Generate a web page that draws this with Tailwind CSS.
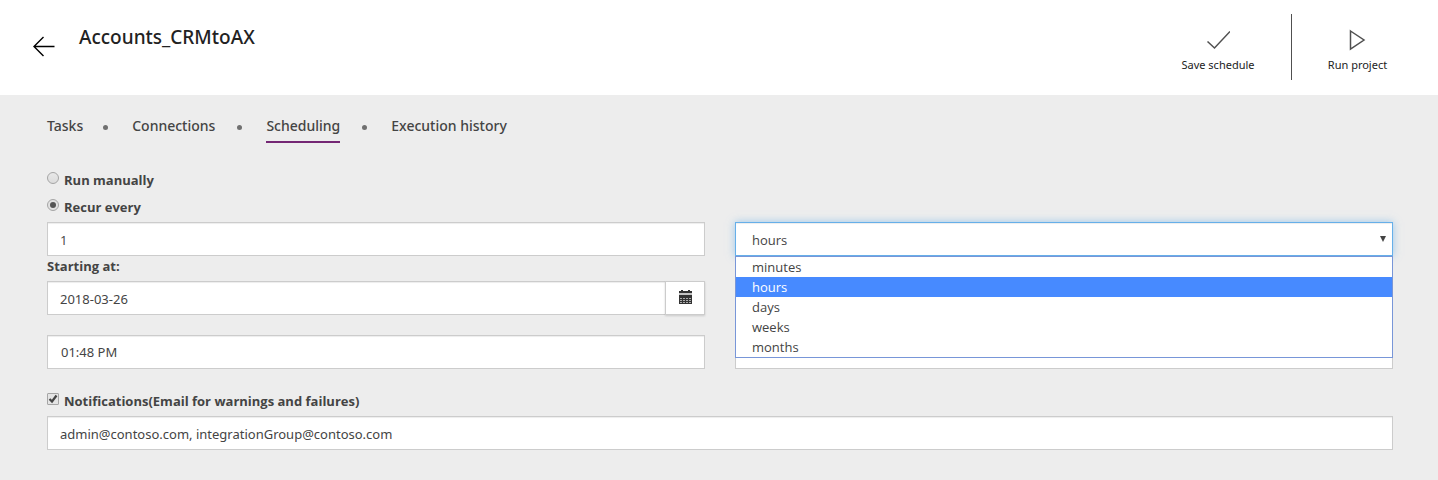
<!DOCTYPE html>
<html lang="en">
<head>
<meta charset="utf-8">
<meta name="viewport" content="width=device-width, initial-scale=1">
<title>Accounts_CRMtoAX</title>
<script src="https://cdn.jsdelivr.net/npm/@tailwindcss/browser@4"></script>
</head>
<body class="min-h-screen bg-[#ededed] font-['Open_Sans','Noto_Sans',sans-serif] text-[13px] leading-5 text-[#444]">
<header class="flex h-[95px] items-start bg-white pl-8 pr-[15px] font-['Noto_Sans',sans-serif]">
  <button type="button" aria-label="Back" class="mt-[34px] text-black">
    <svg class="block size-6" viewBox="0 0 24 24" fill="none" stroke="currentColor" stroke-width="1.4"><path d="M22.5 12.5H2M11.5 3L2 12.5L11.5 22"/></svg>
  </button>
  <h1 class="ml-[23px] mt-6 text-[19px] leading-[26px] font-medium text-[#222]">Accounts_CRMtoAX</h1>
  <div class="ml-auto mt-[14px] flex h-[66px] text-[11px] leading-4 text-[#222]">
    <button type="button" class="flex w-[146px] flex-col items-center pt-[14px]">
      <svg class="block size-6" viewBox="0 0 24 24" fill="none" stroke="#505050" stroke-width="1.5"><path d="M1.5 13.5L8.5 20L24 3.5"/></svg>
      <span class="mt-[5px]">Save schedule</span>
    </button>
    <div class="w-px bg-[#505050]"></div>
    <button type="button" class="flex w-[131px] flex-col items-center pt-[14px]">
      <svg class="block size-6" viewBox="0 0 24 24" fill="none" stroke="#505050" stroke-width="1.5"><path d="M4.5 3L18 12L4.5 21Z"/></svg>
      <span class="mt-[5px]">Run project</span>
    </button>
  </div>
</header>
<main class="pl-[47px] pr-[45px] pt-5">
  <nav class="flex items-start font-['Noto_Sans',sans-serif] text-[14px] leading-[22px] font-medium">
    <a href="#tasks" class="whitespace-nowrap">Tasks</a>
    <span class="mr-6 ml-5 mt-[10px] size-[5px] rounded-full bg-[#707070]"></span>
    <a href="#connections" class="whitespace-nowrap">Connections</a>
    <span class="mr-6 ml-[22px] mt-[10px] size-[5px] rounded-full bg-[#707070]"></span>
    <a href="#scheduling" aria-current="page" class="border-b-2 border-[#742774] pb-1 whitespace-nowrap">Scheduling</a>
    <span class="mr-6 ml-[22px] mt-[10px] size-[5px] rounded-full bg-[#707070]"></span>
    <a href="#history" class="whitespace-nowrap">Execution history</a>
  </nav>
  <form class="mt-[27px]">
    <div class="flex flex-col gap-[7px] font-bold">
      <label class="flex h-5 items-start gap-[5px]"><input type="radio" name="mode" class="mt-[2px] size-3 appearance-none rounded-full border border-[#a5a5a5] bg-linear-to-b from-[#e8e8e8] to-[#dcdcdc]">Run manually</label>
      <label class="flex h-5 items-start gap-[5px]"><input type="radio" name="mode" checked class="mt-[2px] grid size-3 appearance-none place-items-center rounded-full border border-[#a5a5a5] bg-[#e2e2e2] before:size-[6px] before:rounded-full before:bg-[#555]">Recur every</label>
    </div>
    <div class="mt-[5px] grid grid-cols-2 gap-x-[30px]">
      <input type="text" aria-label="Recurrence interval" value="1" class="h-[34px] w-full border border-[#ccc] bg-white px-3 pt-[2px] shadow-[inset_0_1px_1px_rgba(0,0,0,0.075)]">
      <div class="relative">
        <select aria-label="Recurrence unit" class="block h-[34px] w-full appearance-none border border-[#66afe9] bg-white px-4 pt-[2px] shadow-[inset_0_1px_1px_rgba(0,0,0,0.075),0_0_8px_rgba(102,175,233,0.6)]">
          <option>minutes</option><option selected>hours</option><option>days</option><option>weeks</option><option>months</option>
        </select>
        <svg class="pointer-events-none absolute top-[14px] right-[7px] h-[6px] w-[6px]" viewBox="0 0 6 6" fill="#444"><path d="M0 0H6L3 6Z"/></svg>
        <ul role="listbox" aria-label="Recurrence unit choices" class="absolute top-[34px] right-0 left-0 z-10 border border-[#7896d8] bg-white">
          <li role="option" class="h-5 px-4">minutes</li>
          <li role="option" aria-selected="true" class="h-5 bg-[#478aff] px-4 text-white">hours</li>
          <li role="option" class="h-5 px-4">days</li>
          <li role="option" class="h-5 px-4">weeks</li>
          <li role="option" class="h-5 px-4">months</li>
        </ul>
      </div>
      <label for="start" class="col-span-2 mb-[5px] h-5 font-bold">Starting at:</label>
      <div class="flex h-[34px]">
        <input id="start" type="text" value="2018-03-26" class="min-w-0 flex-1 border border-r-0 border-[#ccc] bg-white px-3 pt-[2px] font-['Noto_Sans',sans-serif] shadow-[inset_0_1px_1px_rgba(0,0,0,0.075)]">
        <button type="button" aria-label="Choose date" class="flex w-10 items-start justify-center border border-[#ccc] bg-white pt-[8px] shadow-[0_1px_2px_rgba(0,0,0,0.15)]">
          <svg class="block h-[14px] w-[13px]" viewBox="0 0 13 14" shape-rendering="crispEdges"><path fill="#333" d="M2 0h2v1h5V0h2v1h2v2H0V1h2z"/><path fill="#c4c4c4" d="M0 3h13v2H0z"/><path fill="#333" d="M0 5h13v9H0z"/><path stroke="#aaa" d="M1 8.5h11M1 10.5h11M1 12.5h11" stroke-dasharray="2 1"/></svg>
        </button>
      </div>
      <input type="text" aria-label="Start time" value="01:48 PM" class="col-start-1 mt-5 h-[34px] w-full border border-[#ccc] bg-white px-[13px] font-['Noto_Sans',sans-serif] shadow-[inset_0_1px_1px_rgba(0,0,0,0.075)]">
      <input type="text" aria-label="Time zone" class="mt-5 h-[34px] w-full border border-[#ccc] bg-white px-3 shadow-[inset_0_1px_1px_rgba(0,0,0,0.075)]">
    </div>
    <label class="mt-[22px] flex h-5 items-start gap-[5px] font-bold">
      <span class="mt-[2px] grid size-3">
        <input type="checkbox" checked class="peer col-start-1 row-start-1 size-3 appearance-none rounded-[1px] border border-[#a5a5a5] bg-[#e4e4e4]">
        <svg class="pointer-events-none invisible col-start-1 row-start-1 size-3 peer-checked:visible" viewBox="0 0 12 12" fill="none"><path d="M2.5 6L5 8.5L9.5 2.5" stroke="#444" stroke-width="2.2"/></svg>
      </span>Notifications(Email for warnings and failures)</label>
    <input type="text" aria-label="Notification recipients" value="admin@contoso.com, integrationGroup@contoso.com" class="mt-[5px] block h-[34px] w-full border border-[#ccc] bg-white px-3 pt-[2px] font-['Noto_Sans',sans-serif] shadow-[inset_0_1px_1px_rgba(0,0,0,0.075)]">
  </form>
</main>
</body>
</html>
